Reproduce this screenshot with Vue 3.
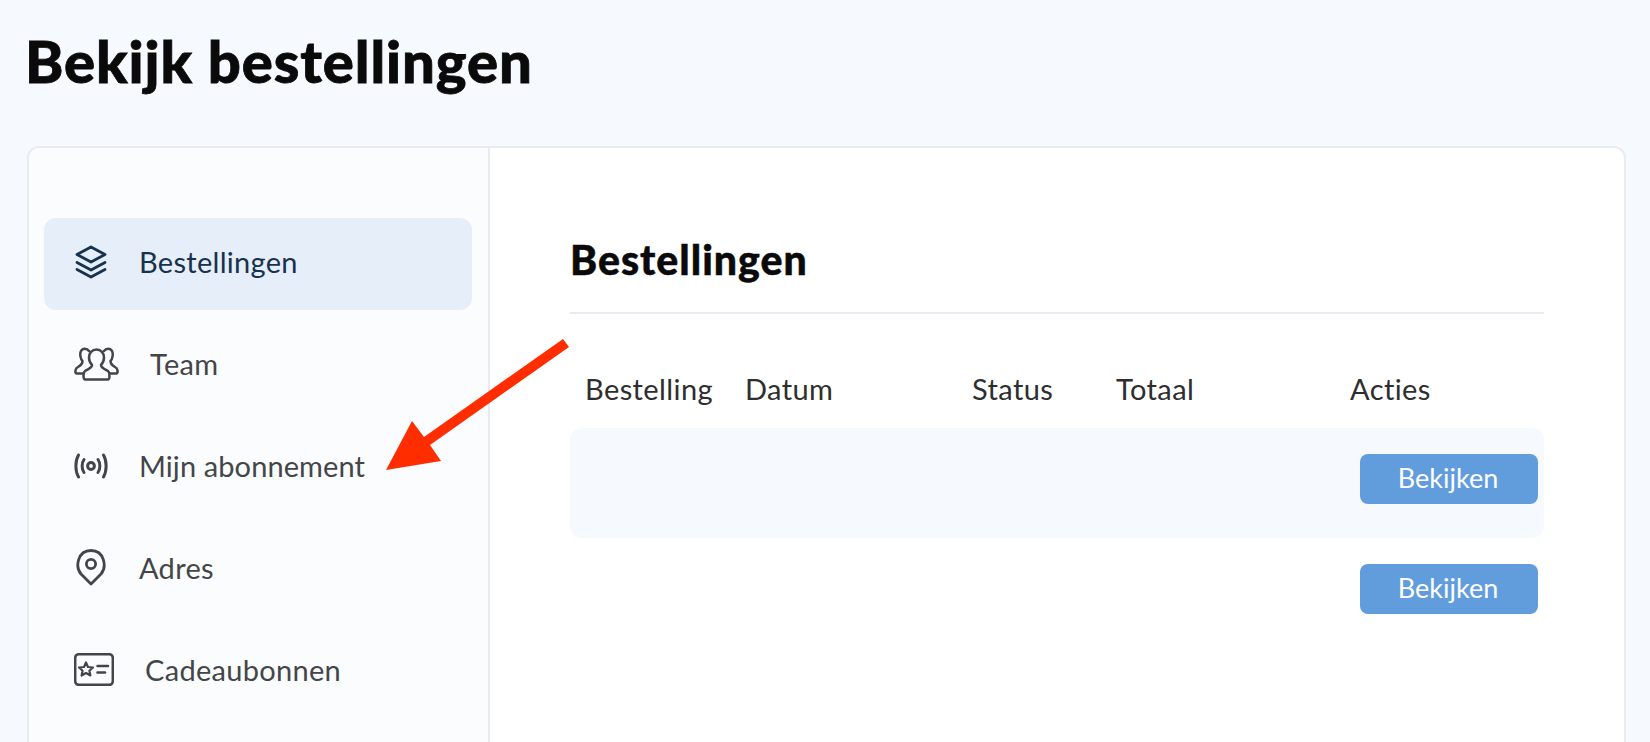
<template>
  <div class="page">
    <h1>Bekijk bestellingen</h1>

    <div class="card">
      <aside class="sidebar">
        <a class="nav-item active layers">
          <svg width="34" height="34" viewBox="0 0 32 34" fill="none" stroke="currentColor" stroke-width="2.8" stroke-linecap="round" stroke-linejoin="round">
            <path d="M16 2 L30 9.500 L16 17 L2 9.500 Z" />
            <path d="M2 17.500 L16 25 L30 17.500" />
            <path d="M2 24.500 L16 32 L30 24.500" />
          </svg>
          <span>Bestellingen</span>
        </a>
        <a class="nav-item team">
          <svg width="45" height="34" viewBox="0 0 45 34" fill="none" stroke="currentColor" stroke-width="2.5" stroke-linecap="round" stroke-linejoin="round">
            <path d="M22.500 2.500 C27 2.500 30 6 30 10.500 C30 14 28.500 16.500 27 18 C27 21 31 22 34 24 C36 25.500 36 32 34 32.500 L11 32.500 C9 32 9 25.500 11 24 C14 22 18 21 18 18 C16.500 16.500 15 14 15 10.500 C15 6 18 2.500 22.500 2.500 Z" />
            <path d="M15 4 C13 1 8.500 1 7 4 C5.500 7 6.500 12 8.500 14 C8.500 17 7 18 4 20 C1 21.500 0.500 26 3 26.500 L9.500 26.500" />
            <path d="M30 4 C32 1 36.500 1 38 4 C39.500 7 38.500 12 36.500 14 C36.500 17 38 18 41 20 C44 21.500 44.500 26 42 26.500 L35.500 26.500" />
          </svg>
          <span>Team</span>
        </a>
        <a class="nav-item radio">
          <svg width="34" height="26" viewBox="0 0 34 26" fill="none" stroke="currentColor" stroke-width="3" stroke-linecap="round">
            <circle cx="17" cy="13" r="3.400" />
            <path d="M10 6.500 C7.500 10 7.500 16 10 19.500" />
            <path d="M24 6.500 C26.500 10 26.500 16 24 19.500" />
            <path d="M4.500 2 C1 8 1 18 4.500 24" />
            <path d="M29.500 2 C33 8 33 18 29.500 24" />
          </svg>
          <span>Mijn abonnement</span>
        </a>
        <a class="nav-item pin">
          <svg width="30" height="37" viewBox="0 0 30 37" fill="none" stroke="currentColor" stroke-width="2.800" stroke-linejoin="round">
            <path d="M15 35 L5 25 C-1 18 1.500 1.500 15 1.500 C28.500 1.500 31 18 25 25 Z" />
            <circle cx="15" cy="15" r="4.600" />
          </svg>
          <span>Adres</span>
        </a>
        <a class="nav-item ticket">
          <svg width="40" height="33" viewBox="0 0 40 33" fill="none" stroke="currentColor" stroke-width="2.500" stroke-linecap="round" stroke-linejoin="round">
            <rect x="1.200" y="1.200" width="37.600" height="30.600" rx="3.500" />
            <path d="M12 9.500 L14 14 L19 14.500 L15.400 17.800 L16.400 22.500 L12 20 L7.600 22.500 L8.600 17.800 L5 14.500 L10 14 Z" stroke-width="2.200" />
            <path d="M23.500 13 H34" />
            <path d="M23.500 19.500 H31" />
          </svg>
          <span>Cadeaubonnen</span>
        </a>
      </aside>

      <main class="content">
        <h2>Bestellingen</h2>
        <div class="table-head">
          <span>Bestelling</span>
          <span>Datum</span>
          <span>Status</span>
          <span>Totaal</span>
          <span>Acties</span>
        </div>
        <div class="table-row" v-for="n in 2" :key="n" :class="{ plain: n === 2 }">
          <button>Bekijken</button>
        </div>
      </main>
    </div>

    <svg class="arrow" width="200" height="150" viewBox="370 330 200 150">
      <polygon points="563,339 569,347 430,445 441,461 386,470 412,421 424,437" fill="#ff2d00" />
    </svg>
  </div>
</template>

<script setup>
</script>

<style>
html, body {
  margin: 0;
  height: 100%;
  overflow: hidden;
  background: #f6f9fe;
}
</style>

<style scoped>
.page {
  position: relative;
  box-sizing: border-box;
  height: 100vh;
  overflow: hidden;
  padding: 25px 24px 0 27px;
  font-family: Lato, "Noto Sans", sans-serif;
  color: #0a0a0a;
}

h1 {
  margin: 0 0 49px -2px;
  font-size: 58px;
  line-height: 72px;
  font-weight: 900;
  letter-spacing: 0.9px;
  -webkit-text-stroke: 0.8px #0a0a0a;
}

.card {
  display: flex;
  height: 700px;
  box-sizing: border-box;
  background: #fff;
  border: 2px solid #e8ecf1;
  border-radius: 12px;
  overflow: hidden;
}

.sidebar {
  width: 461px;
  flex: none;
  box-sizing: border-box;
  padding: 70px 16px 0 15px;
  background: #fbfcfe;
  border-right: 2px solid #e8ecf1;
  display: flex;
  flex-direction: column;
  gap: 10px;
}

.nav-item {
  height: 92px;
  box-sizing: border-box;
  display: flex;
  align-items: center;
  padding: 0 0 5px 30px;
  border-radius: 12px;
  color: #434649;
  font-size: 29px;
  letter-spacing: 0.3px;
}

.nav-item.active {
  background: #e6eef9;
  color: #16324f;
}

.layers span { margin-left: 31px; }
.team span { margin-left: 31px; }
.radio span { margin-left: 31px; letter-spacing: 0.1px; }
.pin svg { margin-left: 2px; }
.pin span { margin-left: 33px; }
.ticket span { margin-left: 31px; }

.content {
  flex: 1;
  padding: 90px 80px 0;
}

h2 {
  margin: 0;
  padding-bottom: 30px;
  border-bottom: 2px solid #e8ecf1;
  font-size: 41px;
  line-height: 44px;
  font-weight: 900;
  letter-spacing: 1px;
  -webkit-text-stroke: 0.5px #0a0a0a;
}

.table-head,
.table-row {
  display: grid;
  grid-template-columns: 160px 227px 144px 234px 1fr;
  padding-left: 15px;
}

.table-head {
  height: 114px;
  box-sizing: border-box;
  padding-top: 56px;
  color: #2e2e2e;
  font-size: 29px;
  line-height: 38px;
  letter-spacing: 0.4px;
}

.table-row {
  height: 110px;
  box-sizing: border-box;
  padding-top: 26px;
  border-radius: 12px;
  background: #f6f9fe;
}

.table-row.plain {
  background: none;
}

.table-row button {
  grid-column: 5;
  width: 178px;
  height: 50px;
  margin-left: 10px;
  padding: 0 2px 3px 0;
  border: none;
  border-radius: 8px;
  background: #619cdd;
  color: #fff;
  font-family: inherit;
  font-size: 27px;
}

.arrow {
  position: absolute;
  left: 370px;
  top: 330px;
}
</style>
